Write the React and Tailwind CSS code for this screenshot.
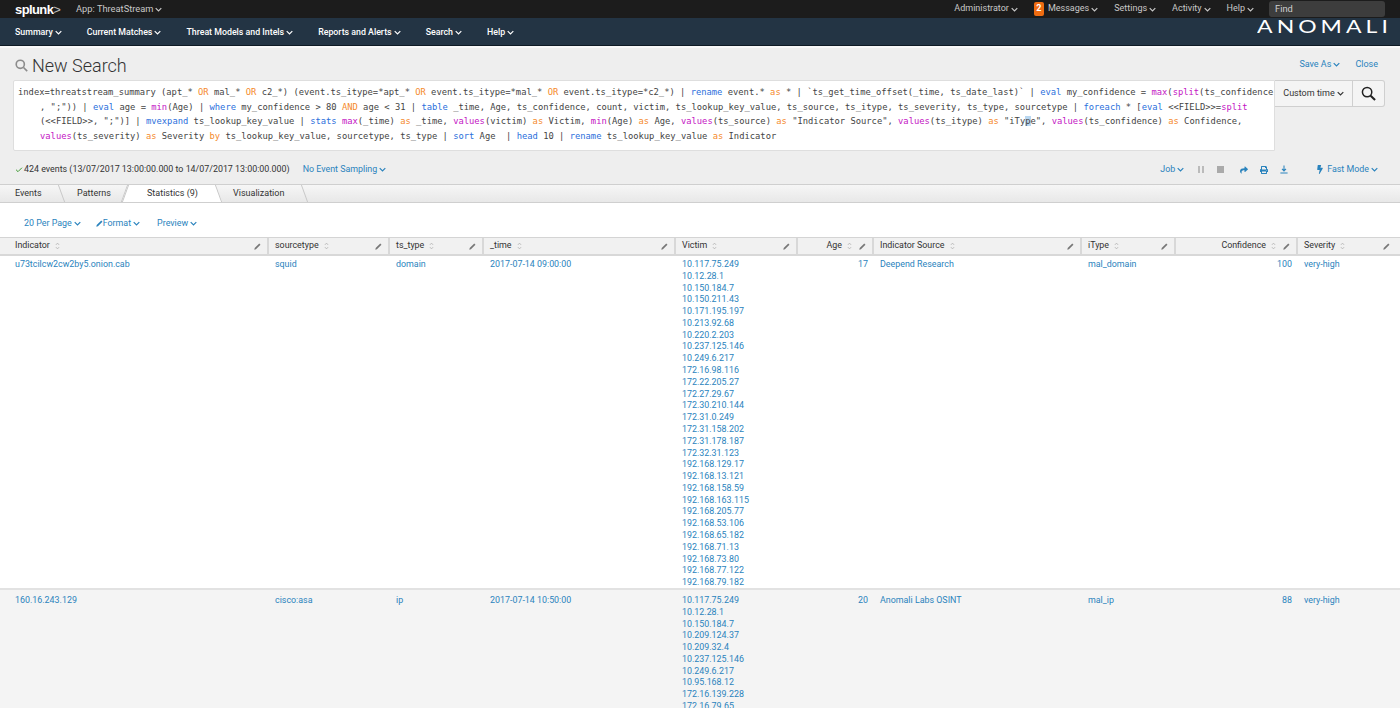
import { Check } from "lucide-react";
import { FaBolt, FaPrint, FaShare } from "react-icons/fa";

const columns = [
  { name: "Indicator" },
  { name: "sourcetype" },
  { name: "ts_type" },
  { name: "_time" },
  { name: "Victim" },
  { name: "Age", right: true },
  { name: "Indicator Source" },
  { name: "iType" },
  { name: "Confidence", right: true },
  { name: "Severity" },
];

const rows = [
  {
    indicator: "u73tcilcw2cw2by5.onion.cab",
    sourcetype: "squid",
    type: "domain",
    time: "2017-07-14 09:00:00",
    age: "17",
    source: "Deepend Research",
    itype: "mal_domain",
    confidence: "100",
    severity: "very-high",
    bg: "bg-white",
    h: "h-[334px]",
    victims: [
      "10.117.75.249", "10.12.28.1", "10.150.184.7", "10.150.211.43", "10.171.195.197", "10.213.92.68", "10.220.2.203",
      "10.237.125.146", "10.249.6.217", "172.16.98.116", "172.22.205.27", "172.27.29.67", "172.30.210.144", "172.31.0.249",
      "172.31.158.202", "172.31.178.187", "172.32.31.123", "192.168.129.17", "192.168.13.121", "192.168.158.59",
      "192.168.163.115", "192.168.205.77", "192.168.53.106", "192.168.65.182", "192.168.71.13", "192.168.73.80",
      "192.168.77.122", "192.168.79.182",
    ],
  },
  {
    indicator: "160.16.243.129",
    sourcetype: "cisco:asa",
    type: "ip",
    time: "2017-07-14 10:50:00",
    age: "20",
    source: "Anomali Labs OSINT",
    itype: "mal_ip",
    confidence: "88",
    severity: "very-high",
    bg: "bg-[#f4f4f4]",
    h: "h-[150px]",
    victims: [
      "10.117.75.249", "10.12.28.1", "10.150.184.7", "10.209.124.37", "10.209.32.4", "10.237.125.146", "10.249.6.217",
      "10.95.168.12", "172.16.139.228", "172.16.79.65",
    ],
  },
];

function Chevron({ className = "" }) {
  return (
    <svg viewBox="0 0 10 6" className={`inline-block w-[7px] h-[5px] shrink-0 ${className}`} fill="none" stroke="currentColor" strokeWidth="1.7">
      <path d="M1 1l4 4 4-4" />
    </svg>
  );
}

function Pencil() {
  return (
    <svg viewBox="0 0 8 8" className="w-[7px] h-[7px] text-[#777] shrink-0" fill="currentColor">
      <path d="M6 .6L7.4 2 2.2 7.2 .4 7.6 .8 5.8z" />
    </svg>
  );
}

function Sort() {
  return (
    <svg viewBox="0 0 6 10" className="w-[5px] h-[8px] text-[#aaa] shrink-0" fill="none" stroke="currentColor" strokeWidth="0.9">
      <path d="M1 3.6L3 1.4l2 2.2M1 6.4l2 2.2 2-2.2" />
    </svg>
  );
}

function NavItem({ children }) {
  return (
    <span className="flex items-center gap-[2px]">
      {children}
      <Chevron />
    </span>
  );
}

const O = ({ children }) => <span className="text-[#f58a2c]">{children}</span>;
const B = ({ children }) => <span className="text-[#2b6fdc]">{children}</span>;
const M = ({ children }) => <span className="text-[#c414c4]">{children}</span>;

function SearchQuery() {
  return (
    <div className="font-['DejaVu_Sans_Mono',monospace] text-[8.8px] leading-[14.7px] text-[#444] whitespace-pre">
      <div>
        index=threatstream_summary (apt_* <O>OR</O> mal_* <O>OR</O> c2_*) (event.ts_itype=*apt_* <O>OR</O> event.ts_itype=*mal_* <O>OR</O> event.ts_itype=*c2_*) | <B>rename</B> event.* <O>as</O> * | `ts_get_time_offset(_time, ts_date_last)` | <B>eval</B> my_confidence = <M>max</M>(<M>split</M>(ts_confidence
      </div>
      <div className="pl-[22px]">
        , ";")) | <B>eval</B> age = <M>min</M>(Age) | <B>where</B> my_confidence &gt; 80 <O>AND</O> age &lt; 31 | <B>table</B> _time, Age, ts_confidence, count, victim, ts_lookup_key_value, ts_source, ts_itype, ts_severity, ts_type, sourcetype | <B>foreach</B> * [<B>eval</B> &lt;&lt;FIELD&gt;&gt;=<M>split</M>
      </div>
      <div className="pl-[22px]">
        (&lt;&lt;FIELD&gt;&gt;, ";")] | <B>mvexpand</B> ts_lookup_key_value | <B>stats</B> <M>max</M>(_time) <O>as</O> _time, <M>values</M>(victim) <O>as</O> Victim, <M>min</M>(Age) <O>as</O> Age, <M>values</M>(ts_source) <O>as</O> "Indicator Source", <M>values</M>(ts_itype) <O>as</O> "iTy<span className="bg-[#b9d7f0]">p</span>e", <M>values</M>(ts_confidence) <O>as</O> Confidence,
      </div>
      <div className="pl-[22px]">
        <M>values</M>(ts_severity) <O>as</O> Severity <O>by</O> ts_lookup_key_value, sourcetype, ts_type | <B>sort</B> Age  | <B>head</B> 10 | <B>rename</B> ts_lookup_key_value <O>as</O> Indicator
      </div>
    </div>
  );
}

function Tab({ label, width, active, slant }) {
  return (
    <div className={`relative flex items-center h-full text-[9px] text-[#333] ${width} ${active ? "h-[calc(100%+1px)]" : ""}`}>
      {active && <span className="absolute inset-y-0 left-[3px] right-[3px] bg-white" />}
      {active && <span className="absolute inset-y-0 left-0 w-[8px] bg-white border-l border-[#c8c8c8] -skew-x-[20deg]" />}
      {active && <span className="absolute inset-y-0 right-0 w-[8px] bg-white border-r border-[#c8c8c8] skew-x-[20deg]" />}
      {slant === "back" && <span className="absolute inset-y-0 right-0 w-px bg-[#c8c8c8] skew-x-[20deg]" />}
      {slant === "forward" && <span className="absolute inset-y-0 right-0 w-px bg-[#c8c8c8] -skew-x-[20deg]" />}
      <span className="relative">{label}</span>
    </div>
  );
}

function HeaderCell({ col }) {
  return (
    <div className="flex items-center h-full pl-[6px] pr-[6px] border-r-2 border-[#d8d8d8] first:pl-[15px] last:border-r-0 last:pr-[10px] text-[8.9px] text-[#333]">
      <div className={`flex items-center gap-[5px] flex-1 min-w-0 ${col.right ? "justify-end pr-[7px]" : ""}`}>
        <span>{col.name}</span>
        <Sort />
      </div>
      <Pencil />
    </div>
  );
}

function Row({ row, first }) {
  const pad = first ? "pt-[3px]" : "pt-[5px]";
  const cell = `${pad} pl-[6px]`;
  const right = `${pad} pr-[6px] text-right`;
  return (
    <div className={`grid grid-cols-[269px_121px_94px_192px_122px_76px_208px_94px_122px_102px] ${row.h} ${row.bg} text-[8.9px] leading-[11.78px] text-[#2a83bd] overflow-hidden`}>
      <div className={`${pad} pl-[15px]`}>{row.indicator}</div>
      <div className={cell}>{row.sourcetype}</div>
      <div className={cell}>{row.type}</div>
      <div className={cell}>{row.time}</div>
      <div className={cell}>
        {row.victims.map((v) => (
          <div key={v}>{v}</div>
        ))}
      </div>
      <div className={right}>{row.age}</div>
      <div className={cell}>{row.source}</div>
      <div className={cell}>{row.itype}</div>
      <div className={right}>{row.confidence}</div>
      <div className={cell}>{row.severity}</div>
    </div>
  );
}

export default function App() {
  return (
    <div className="h-[708px] w-[1400px] overflow-hidden bg-white font-['Roboto',sans-serif]">
      {/* top bar */}
      <div className="h-[18px] bg-[#1c1c1c] flex items-center pl-[15px] text-[9.3px] text-[#c8c8c8]">
        <span className="font-['Liberation_Sans',sans-serif] font-bold text-[13px] tracking-[-0.6px] text-white w-[61px] leading-none">
          splunk<span className="font-normal text-[#bbb]">&gt;</span>
        </span>
        <span className="flex items-center gap-[2px]">
          App: ThreatStream <Chevron />
        </span>
        <div className="ml-auto flex items-center gap-[16px] pr-[15px] text-[9px]">
          <NavItem>Administrator</NavItem>
          <span className="flex items-center gap-[4px]">
            <span className="w-[10px] h-[14px] bg-[#ef6c11] rounded-[2px] text-white font-bold text-[9px] flex items-center justify-center">2</span>
            <NavItem>Messages</NavItem>
          </span>
          <NavItem>Settings</NavItem>
          <NavItem>Activity</NavItem>
          <NavItem>Help</NavItem>
          <div className="w-[116px] h-[16px] ml-[-1px] bg-[#3d3d3d] rounded-[3px] px-[6px] flex items-center text-[9.3px] text-[#d0d0d0]">Find</div>
        </div>
      </div>

      {/* app nav */}
      <div className="h-[28px] bg-[#233444] border-b border-[#0e1a24] flex items-center pl-[15px] pr-[12px] pt-[2px] gap-[25px] text-[8.8px] font-medium text-white">
        <NavItem>Summary</NavItem>
        <NavItem>Current Matches</NavItem>
        <NavItem>Threat Models and Intels</NavItem>
        <NavItem>Reports and Alerts</NavItem>
        <NavItem>Search</NavItem>
        <NavItem>Help</NavItem>
        <span className="ml-auto self-start mr-[-4px] origin-right scale-x-[1.35] font-['Lato',sans-serif] font-normal text-[17px] leading-[14px] tracking-[3px] text-white">ANOMALI</span>
      </div>

      <div className="bg-[#eeeeee] border-t-2 border-[#f8f8f8]">
        {/* title */}
        <div className="h-[32px] flex items-center pl-[15px] pr-[22px] pt-[3px]">
          <svg viewBox="0 0 16 16" className="w-[13px] h-[13px] text-[#8c8c8c] mr-[4px]" fill="none" stroke="currentColor" strokeWidth="2">
            <circle cx="6.5" cy="6.5" r="5" />
            <path d="M10.5 10.5l4.5 4.5" />
          </svg>
          <span className="text-[18px] font-light text-[#333] leading-none">New Search</span>
          <div className="ml-auto flex items-center gap-[15px] pb-[2px] text-[9px] text-[#2a83bd]">
            <span className="flex items-center gap-[2px]">
              Save As <Chevron />
            </span>
            <span>Close</span>
          </div>
        </div>

        {/* search bar */}
        <div className="flex pl-[13px] pr-[15px]">
          <div className="w-[1262px] h-[71px] bg-white border border-[#dedede] rounded-l-[2px] pl-[4px] pt-[4px] overflow-hidden">
            <SearchQuery />
          </div>
          <div className="h-[27px] flex items-stretch bg-[#f4f4f4] border border-l-0 border-[#cfcfcf] rounded-r-[3px]">
            <div className="w-[78px] flex items-center justify-center gap-[2px] text-[9px] text-[#333] border-r border-[#cfcfcf]">
              Custom time <Chevron />
            </div>
            <div className="w-[31px] flex items-center justify-center">
              <svg viewBox="0 0 16 16" className="w-[15px] h-[15px] text-[#222]" fill="none" stroke="currentColor" strokeWidth="1.6">
                <circle cx="6.5" cy="6.5" r="5" />
                <path d="M10.3 10.3l4.7 4.7" strokeWidth="2.2" />
              </svg>
            </div>
          </div>
        </div>

        {/* job status */}
        <div className="h-[33px] flex items-center pl-[15px] pr-[22px] pt-[5px] text-[8.9px] text-[#2a83bd]">
          <Check className="w-[8px] h-[8px] text-[#3f9a32] mr-[1px]" strokeWidth={3} />
          <span className="text-[#333] mr-[13px]">424 events (13/07/2017 13:00:00.000 to 14/07/2017 13:00:00.000)</span>
          <span className="flex items-center gap-[2px]">
            No Event Sampling <Chevron />
          </span>
          <div className="ml-auto flex items-center">
            <span className="flex items-center gap-[2px] mr-[14px]">
              Job <Chevron />
            </span>
            <span className="flex gap-[2px] mr-[13px]">
              <span className="w-[2px] h-[7px] bg-[#bbb]" />
              <span className="w-[2px] h-[7px] bg-[#bbb]" />
            </span>
            <span className="w-[7px] h-[7px] bg-[#aaa] mr-[16px]" />
            <FaShare className="w-[8px] h-[8px] mr-[12px]" />
            <FaPrint className="w-[8px] h-[8px] mr-[12px]" />
            <svg viewBox="0 0 10 10" className="w-[8px] h-[9px] mr-[29px]" fill="none" stroke="currentColor" strokeWidth="1.3">
              <path d="M5 0v6.5M2.5 4.2L5 6.8l2.5-2.6M.5 9.3h9" />
            </svg>
            <FaBolt className="w-[6px] h-[9px] mr-[4px]" />
            <span className="flex items-center gap-[2px]">
              Fast Mode <Chevron />
            </span>
          </div>
        </div>
      </div>

      {/* tabs */}
      <div className="h-[19px] flex border-y border-[#cfcfcf] bg-gradient-to-b from-[#f6f6f6] to-[#e8e8e8]">
        <Tab label="Events" width="w-[62px] pl-[15px]" slant="back" />
        <Tab label="Patterns" width="w-[63px] pl-[15px]" slant="forward" />
        <Tab label="Statistics (9)" width="w-[94px] pl-[22px]" active />
        <Tab label="Visualization" width="w-[86px] pl-[14px]" slant="back" />
      </div>

      {/* table controls */}
      <div className="h-[34px] flex items-center pl-[24px] pt-[8px] text-[8.9px] text-[#2a83bd]">
        <span className="flex items-center gap-[2px] mr-[15px]">
          20 Per Page <Chevron />
        </span>
        <span className="flex items-center mr-[17px]">
          <svg viewBox="0 0 8 8" className="w-[7px] h-[7px]" fill="currentColor">
            <path d="M6 .6L7.4 2 2.2 7.2 .4 7.6 .8 5.8z" />
          </svg>
          <span className="mr-[2px]">Format</span>
          <Chevron />
        </span>
        <span className="flex items-center gap-[2px]">
          Preview <Chevron />
        </span>
      </div>

      {/* results table */}
      <div className="h-[19px] grid grid-cols-[269px_121px_94px_192px_122px_76px_208px_94px_122px_102px] bg-[#f1f1f1] border-t border-[#d4d4d4] border-b-2 border-b-[#d8d8d8]">
        {columns.map((col) => (
          <HeaderCell key={col.name} col={col} />
        ))}
      </div>
      <div className="divide-y-2 divide-[#e2e2e2]">
        {rows.map((row, i) => (
          <Row key={row.indicator} row={row} first={i === 0} />
        ))}
      </div>
    </div>
  );
}
